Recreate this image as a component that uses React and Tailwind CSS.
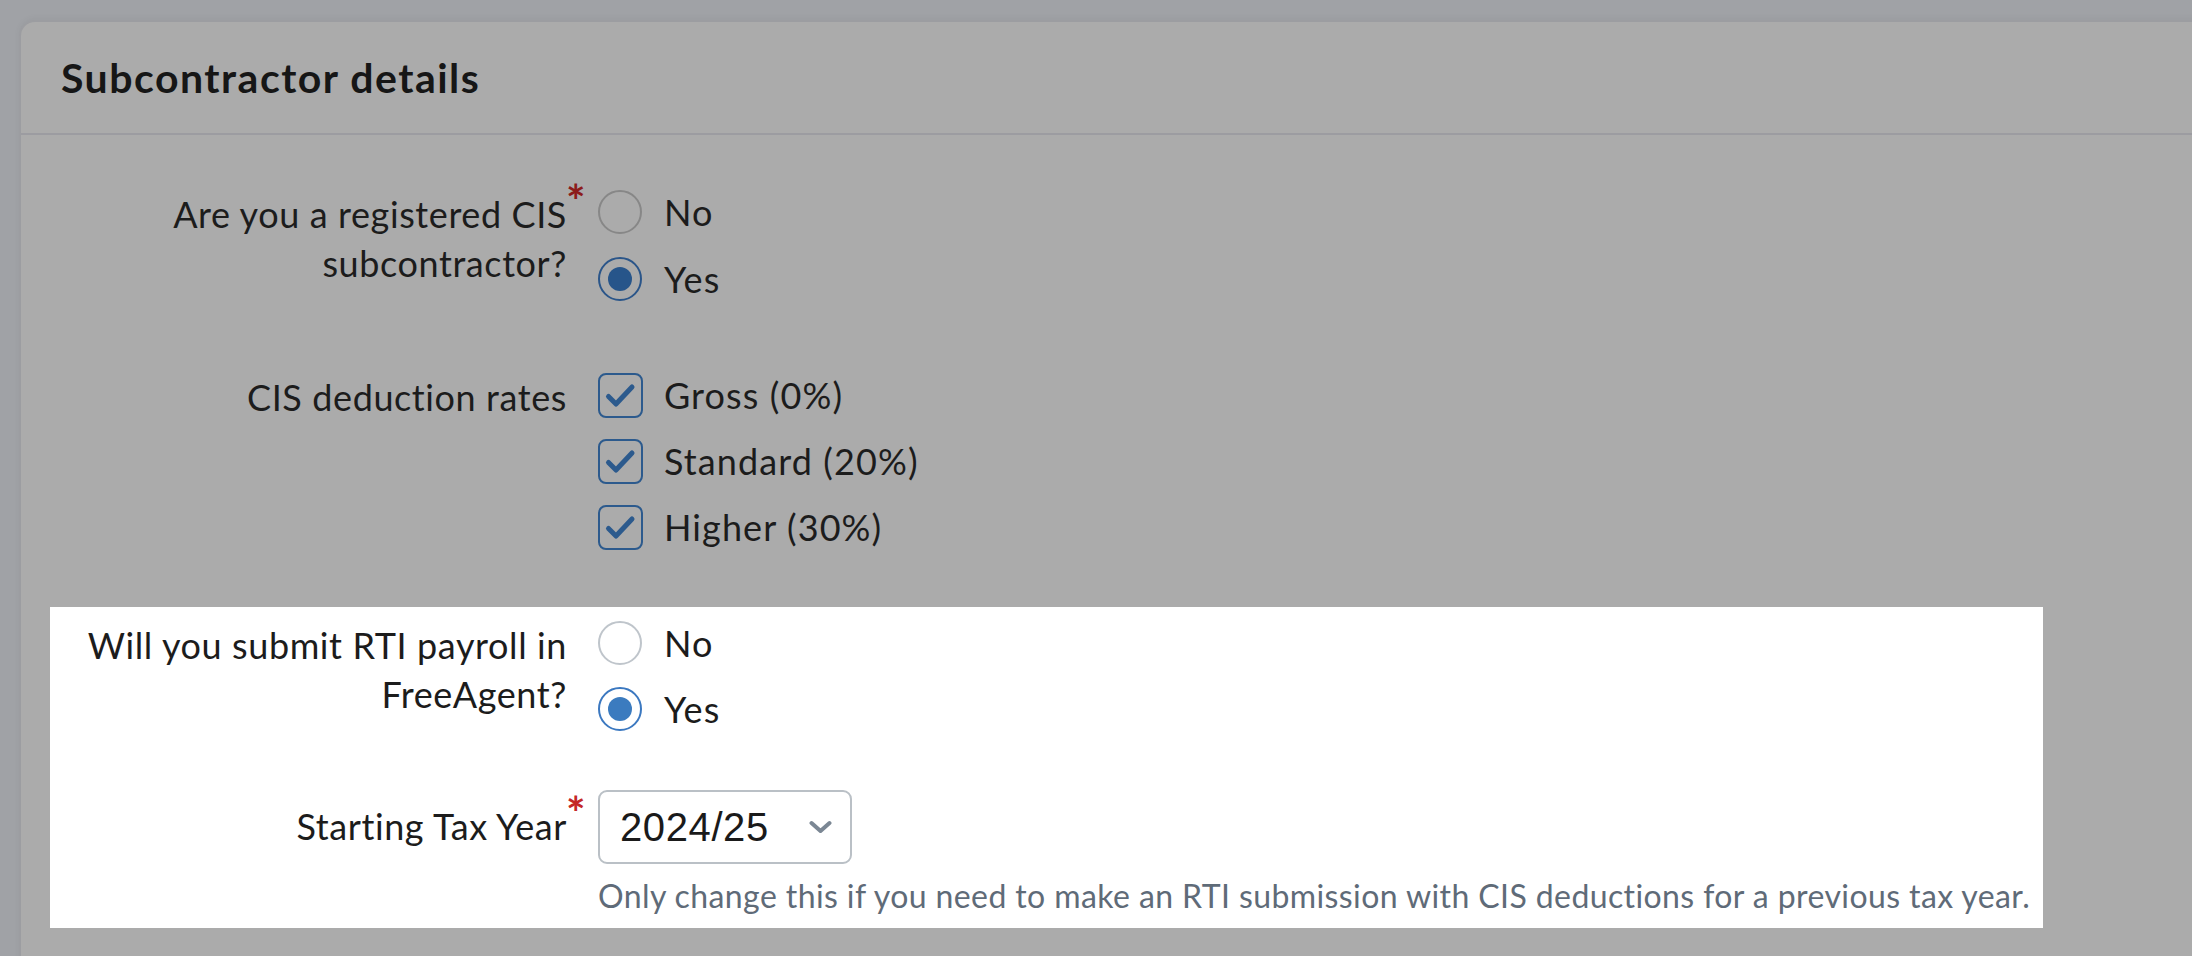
import React from 'react';

const font = { fontFamily: 'Lato, "Liberation Sans", sans-serif' };

function Radio({ checked, dim, label }) {
    const ring = checked
        ? (dim ? 'border-[#2a5589]' : 'border-[#3b78c0]')
        : (dim ? 'border-[#878787]' : 'border-[#bfc5cb]');
    const dot = dim ? 'bg-[#27558a]' : 'bg-[#3b7bbf]';
    return (
        <div className="flex items-center h-[44px]">
            <div className={`w-[44px] h-[44px] rounded-full border-2 ${ring} flex items-center justify-center`}>
                {checked && <div className={`w-[24px] h-[24px] rounded-full ${dot}`} />}
            </div>
            <span className="ml-[22px] text-[36px] leading-[44px] tracking-[1.1px] text-[#1c1c1c]">{label}</span>
        </div>
    );
}

function Checkbox({ label }) {
    return (
        <div className="flex items-center h-[44px]">
            <div className="relative w-[45px] h-[45px] rounded-[8px] border-2 border-[#2c5a8d]">
                <svg className="absolute -left-[2px] -top-[2px]" width="45" height="45" viewBox="0 0 45 45">
                    <path d="M10.5 23.5 L18 31 L34 14" fill="none" stroke="#2c5a8d" strokeWidth="5" strokeLinecap="round" strokeLinejoin="round" />
                </svg>
            </div>
            <span className="ml-[21px] text-[36px] leading-[44px] tracking-[1.1px] text-[#1c1c1c]">{label}</span>
        </div>
    );
}

function Label({ children, required, dim, className = '' }) {
    return (
        <div className={`w-[517px] shrink-0 text-right text-[36px] leading-[49px] tracking-[0.6px] text-[#1c1c1c] ${className}`}>
            <span className="relative">
                {children}
                {required && (
                    <span className={`absolute left-full -ml-[1px] -top-[14px] text-[46px] leading-none font-bold ${dim ? 'text-[#8c1b1b]' : 'text-[#c42828]'}`}>*</span>
                )}
            </span>
        </div>
    );
}

export default function App() {
    return (
        <div className="w-[2192px] h-[956px] overflow-hidden bg-[#a0a2a6] pt-[20px] pl-[19px]" style={font}>
            <div className="w-[2220px] h-[1000px] bg-[#ababab] border-2 border-[#9c9da1] rounded-tl-[16px] shadow-[0_-2px_6px_rgba(0,0,0,0.04)]">
                {/* header */}
                <header className="h-[113px] flex items-center pl-[40px] border-b-2 border-[#9c9ca1]">
                    <h2 className="text-[41px] font-bold text-[#161616] tracking-[1.5px]">Subcontractor details</h2>
                </header>

                <div className="pl-[29px] pt-[55px]">
                    {/* registered */}
                    <div className="flex">
                        <Label required dim>Are you a registered CIS<br />subcontractor?</Label>
                        <div className="ml-[31px] flex flex-col gap-[23px]">
                            <Radio dim label="No" />
                            <Radio dim checked label="Yes" />
                        </div>
                    </div>

                    {/* deduction rates */}
                    <div className="flex mt-[72px]">
                        <Label>CIS deduction rates</Label>
                        <div className="ml-[31px] flex flex-col gap-[22px]">
                            <Checkbox label="Gross (0%)" />
                            <Checkbox label="Standard (20%)" />
                            <Checkbox label="Higher (30%)" />
                        </div>
                    </div>

                    {/* spotlight */}
                    <div className="mt-[58px] w-[1993px] bg-white pt-[14px] pb-[12px]">
                        <div className="flex">
                            <Label>Will you submit RTI payroll in<br />FreeAgent?</Label>
                            <div className="ml-[31px] flex flex-col gap-[22px]">
                                <Radio label="No" />
                                <Radio checked label="Yes" />
                            </div>
                        </div>

                        <div className="flex mt-[59px]">
                            <Label required className="pt-[12px]">Starting Tax Year</Label>
                            <div className="ml-[31px]">
                                <div className="w-[254px] h-[74px] rounded-[9px] border-2 border-[#bac0c6] flex items-center justify-between pl-[20px] pr-[18px]">
                                    <span className="text-[40px] tracking-[0.6px] text-[#1a1a1a]" style={{ fontFamily: '"Liberation Sans", Arial, sans-serif' }}>2024/25</span>
                                    <svg width="23" height="14" viewBox="0 0 23 14">
                                        <path d="M2.5 3 L11.5 11 L20.5 3" fill="none" stroke="#7b8794" strokeWidth="4" strokeLinecap="round" strokeLinejoin="round" />
                                    </svg>
                                </div>
                                <p className="mt-[12px] text-[32px] leading-[40px] tracking-[0.4px] text-[#5f6b78]">
                                    Only change this if you need to make an RTI submission with CIS deductions for a previous tax year.
                                </p>
                            </div>
                        </div>
                    </div>
                </div>
            </div>
        </div>
    );
}
